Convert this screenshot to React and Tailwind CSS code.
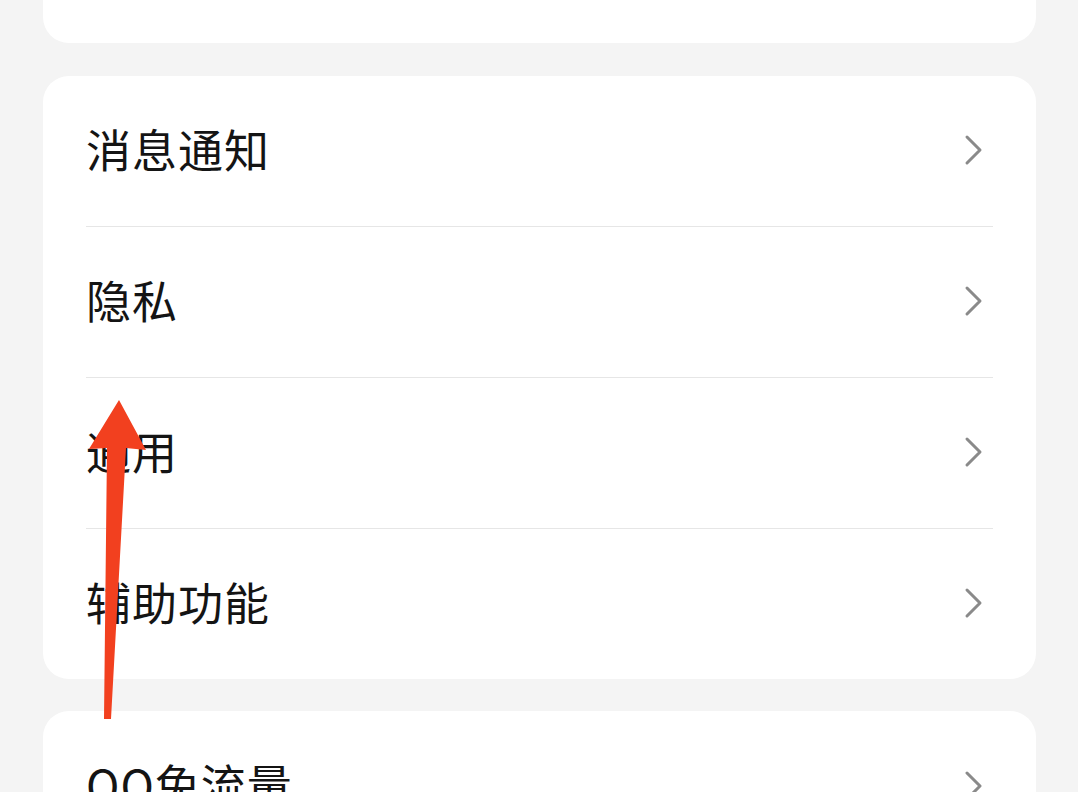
import React from "react";

const font = { fontFamily: '"Noto Sans CJK SC", "Noto Sans", sans-serif' };

function Chevron() {
  return (
    <svg width="20" height="32" viewBox="0 0 20 32" className="mr-[10px] mb-[2px] shrink-0">
      <path d="M4 3 L17 16 L4 29" fill="none" stroke="#8a8a8a" strokeWidth="3" strokeLinecap="round" strokeLinejoin="round" />
    </svg>
  );
}

function Row({ label, last, h = "h-[151px]" }) {
  return (
    <div className={"flex items-center justify-between " + h + " " + (last ? "" : "border-b border-[#e6e6e6]")}>
      <span className="mb-[6px] text-[45px] leading-none text-[#141414] tracking-[1px]">{label}</span>
      <Chevron />
    </div>
  );
}

export default function App() {
  return (
    <div className="relative h-[792px] w-[1078px] overflow-hidden bg-[#f4f4f4]" style={font}>
      <div className="flex flex-col pl-[43px] pr-[42px]">
        <div className="h-[43px] rounded-b-[26px] bg-white" />
        <div className="mt-[33px] rounded-[26px] bg-white px-[43px]">
          <Row label="消息通知" />
          <Row label="隐私" />
          <Row label="通用" />
          <Row label="辅助功能" last h="h-[150px]" />
        </div>
        <div className="mt-[32px] rounded-[26px] bg-white px-[43px]">
          <Row label="QQ免流量" last />
        </div>
      </div>
      <svg className="absolute left-0 top-0" width="1078" height="792" viewBox="0 0 1078 792">
        <polygon
          points="119,400 146,450 126,448 111,719 104,719 107,448 89,449"
          fill="#f2401f"
        />
      </svg>
    </div>
  );
}
